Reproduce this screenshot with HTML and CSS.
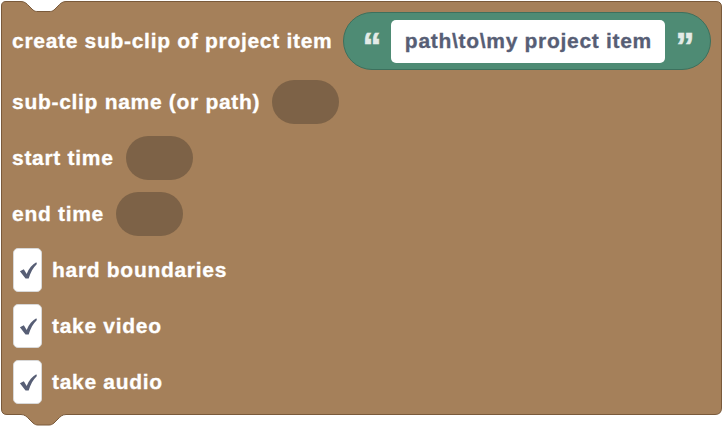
FILE: index.html
```html
<!DOCTYPE html>
<html>
<head>
<meta charset="utf-8">
<link rel="stylesheet" href="styles.css">
</head>
<body>
<div class="block">
  <svg class="shape" width="723" height="427" viewBox="0 0 723 427">
    <path d="M1.5,6 Q1.5,1.5 6,1.5 H21 C25,1.5 27,4 29,6 L33,10 C35,11.5 36,11.5 38,11.5 H49 C51,11.5 52,11.5 54,10 L58,6 C60,4 62,1.5 66,1.5 H716 Q721.5,1.5 721.5,7 V408 Q721.5,414.5 715,414.5 H66 C62,414.5 60,417 58,419 L54,423 C52,424.5 51,425 49,425 H38 C36,425 35,424.5 33,423 L29,419 C27,417 25,414.5 21,414.5 H7 Q1.5,414.5 1.5,409 Z" fill="#a5805a" stroke="#7a5a3b" stroke-width="1"/>
  </svg>
  <div class="rows">
    <div class="row first">
      <span class="label">create sub-clip of project item</span>
      <div class="text-input">
        <span class="quote">“</span>
        <span class="field">path\to\my project item</span>
        <span class="quote">”</span>
      </div>
    </div>
    <div class="row">
      <span class="label">sub-clip name (or path)</span>
      <span class="slot"></span>
    </div>
    <div class="row">
      <span class="label">start time</span>
      <span class="slot"></span>
    </div>
    <div class="row">
      <span class="label">end time</span>
      <span class="slot"></span>
    </div>
    <div class="row">
      <span class="check"><svg width="18" height="18" viewBox="0 0 16 16"><path d="M0.8,9 L4.3,7.4 L6.8,11.6 C8.8,6.6 11.8,3 15.4,1.2 L15.9,2.6 C12.6,5.8 10.2,10 8.6,15.6 L5.8,15.6 Z" fill="#575e75"/></svg></span>
      <span class="label">hard boundaries</span>
    </div>
    <div class="row">
      <span class="check"><svg width="18" height="18" viewBox="0 0 16 16"><path d="M0.8,9 L4.3,7.4 L6.8,11.6 C8.8,6.6 11.8,3 15.4,1.2 L15.9,2.6 C12.6,5.8 10.2,10 8.6,15.6 L5.8,15.6 Z" fill="#575e75"/></svg></span>
      <span class="label">take video</span>
    </div>
    <div class="row">
      <span class="check"><svg width="18" height="18" viewBox="0 0 16 16"><path d="M0.8,9 L4.3,7.4 L6.8,11.6 C8.8,6.6 11.8,3 15.4,1.2 L15.9,2.6 C12.6,5.8 10.2,10 8.6,15.6 L5.8,15.6 Z" fill="#575e75"/></svg></span>
      <span class="label">take audio</span>
    </div>
  </div>
</div>
</body>
</html>
```
FILE: styles.css
```css
html, body {
  margin: 0;
  padding: 0;
  background: #ffffff;
}
.block {
  position: relative;
  width: 723px;
  height: 427px;
}
.shape {
  position: absolute;
  left: 0;
  top: 0;
}
.rows {
  position: relative;
  display: flex;
  flex-direction: column;
  gap: 12px;
  padding: 12px 0 0 12px;
  font-family: "Liberation Sans", Arial, sans-serif;
  font-weight: bold;
  font-size: 21px;
  letter-spacing: 0.7px;
  color: #ffffff;
  -webkit-text-stroke: 0.3px currentColor;
}
.row {
  display: flex;
  align-items: center;
  height: 44px;
}
.row.first {
  height: 58px;
  margin-bottom: -2px;
}
.label {
  white-space: nowrap;
}
.text-input {
  display: flex;
  align-items: center;
  box-sizing: border-box;
  margin-left: 11px;
  height: 58px;
  width: 368px;
  padding: 0 6px 0 8px;
  background: #4e8b74;
  border: 1px solid #3d705d;
  border-radius: 29px;
}
.quote {
  width: 39px;
  height: 24px;
  text-align: center;
  color: #e3ebe7;
  font-family: "Liberation Sans", Arial, sans-serif;
  font-weight: bold;
  font-size: 38px;
  letter-spacing: 0;
  line-height: 36px;
  overflow: visible;
  -webkit-text-stroke: 0.6px currentColor;
}
.field {
  box-sizing: border-box;
  height: 43px;
  width: 274px;
  display: flex;
  align-items: center;
  justify-content: center;
  background: #ffffff;
  border-radius: 5px;
  color: #575e75;
  -webkit-text-stroke: 0.3px #575e75;
}
.slot {
  display: block;
  margin-left: 12px;
  width: 67px;
  height: 44px;
  border-radius: 22px;
  background: #7d6247;
}
.check {
  box-sizing: border-box;
  display: flex;
  align-items: center;
  justify-content: center;
  width: 29px;
  height: 44px;
  margin-left: 1px;
  margin-right: 10px;
  background: #ffffff;
  border: 1px solid #d8d8d8;
  border-radius: 5px;
  -webkit-text-stroke: 0;
}
```
